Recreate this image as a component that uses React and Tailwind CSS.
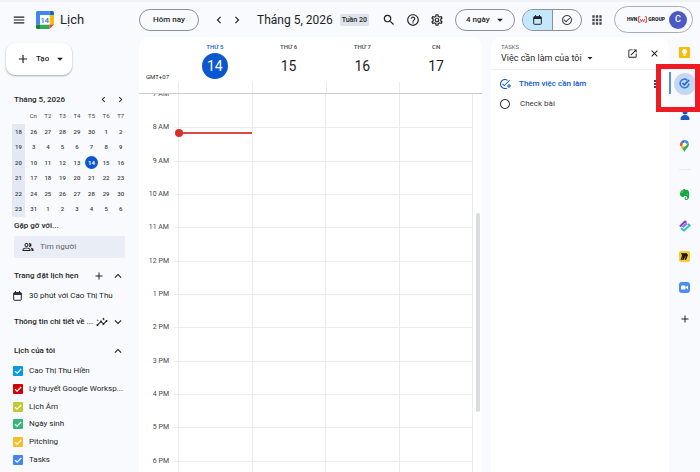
import React from "react";
import {
  MdAdd,
  MdApps,
  MdArrowDropDown,
  MdCheckCircleOutline,
  MdChevronLeft,
  MdChevronRight,
  MdClose,
  MdExpandLess,
  MdExpandMore,
  MdHelpOutline,
  MdInsights,
  MdMenu,
  MdMoreVert,
  MdOpenInNew,
  MdOutlineAddTask,
  MdOutlineCalendarToday,
  MdOutlinePeopleAlt,
  MdOutlineSettings,
  MdPerson,
  MdRadioButtonUnchecked,
  MdSearch,
} from "react-icons/md";
import { SiEvernote } from "react-icons/si";

const weekDays = ["Cn", "T2", "T3", "T4", "T5", "T6", "T7"];

const weeks = [
  { no: 18, days: [26, 27, 28, 29, 30, 1, 2] },
  { no: 19, days: [3, 4, 5, 6, 7, 8, 9] },
  { no: 20, days: [10, 11, 12, 13, 14, 15, 16] },
  { no: 21, days: [17, 18, 19, 20, 21, 22, 23] },
  { no: 22, days: [24, 25, 26, 27, 28, 29, 30] },
  { no: 23, days: [31, 1, 2, 3, 4, 5, 6] },
];

const calendars = [
  { name: "Cao Thị Thu Hiền", color: "bg-[#039be5]" },
  { name: "Lý thuyết Google Worksp...", color: "bg-[#d50000]" },
  { name: "Lịch Âm", color: "bg-[#c0ca33]" },
  { name: "Ngày sinh", color: "bg-[#33b679]" },
  { name: "Pitching", color: "bg-[#f6bf26]" },
  { name: "Tasks", color: "bg-[#4285f4]" },
];

const days = [
  { name: "THỨ 5", date: 14, today: true },
  { name: "THỨ 6", date: 15 },
  { name: "THỨ 7", date: 16 },
  { name: "CN", date: 17 },
];

const hours = ["7 AM", "8 AM", "9 AM", "10 AM", "11 AM", "12 PM", "1 PM", "2 PM", "3 PM", "4 PM", "5 PM", "6 PM"];

const CalendarLogo = () => (
  <svg viewBox="0 0 36 36" className="size-[18px] shrink-0" aria-hidden="true">
    <path d="M3 0h24v8H8v19H0V3a3 3 0 0 1 3-3z" fill="#4285f4" />
    <path d="M27 0h6a3 3 0 0 1 3 3v5h-9z" fill="#1967d2" />
    <path d="M27 8h9v19h-9z" fill="#fbbc04" />
    <path d="M8 27h19v9H8z" fill="#34a853" />
    <path d="M0 27h8v9H3a3 3 0 0 1-3-3z" fill="#188038" />
    <path d="M27 27h9l-9 9z" fill="#ea4335" />
    <path d="M8 8h19v19H8z" fill="#fff" />
    <text x="17.5" y="23" textAnchor="middle" fontSize="15" fontWeight="500" fontFamily="Roboto, sans-serif" fill="#1a73e8">
      14
    </text>
  </svg>
);

const CalendarIcon = () => (
  <svg viewBox="0 0 20 22" className="h-[10px] w-[9px] shrink-0" fill="none" stroke="currentColor" strokeWidth="2.2" aria-hidden="true">
    <rect x="1.500" y="3.500" width="17" height="17" rx="1.500" />
    <path d="M5.500 0v4M14.500 0v4" />
    <path d="M1.500 6.500h17" strokeWidth="4" />
  </svg>
);

const Header = () => (
  <header className="flex h-[37px] shrink-0 items-center border-t-2 border-[#f0f2f6] pl-3 pr-[7px]">
    <div className="flex w-[127px] shrink-0 items-center">
      <button aria-label="Menu chính">
        <MdMenu className="size-[14px]" />
      </button>
      <div className="ml-[10px] flex items-center gap-[6px]">
        <CalendarLogo />
        <span className="text-[13px] leading-5">Lịch</span>
      </div>
    </div>
    <button className="h-[22px] w-[60px] shrink-0 rounded-full border border-[#8d9199] text-[8px] font-medium">Hôm nay</button>
    <div className="ml-[13px] flex gap-1">
      <button aria-label="Trước">
        <MdChevronLeft className="size-[14px]" />
      </button>
      <button aria-label="Sau">
        <MdChevronRight className="size-[14px]" />
      </button>
    </div>
    <h1 className="ml-[13px] whitespace-nowrap text-[12px] leading-4">Tháng 5, 2026</h1>
    <span className="ml-[7px] whitespace-nowrap rounded-xs bg-[#dde3ea] px-[2px] text-[7px] font-medium leading-3">Tuần 20</span>
    <div className="ml-auto flex items-center">
      <div className="flex items-center gap-[10px]">
        <button aria-label="Tìm kiếm">
          <MdSearch className="size-[14px]" />
        </button>
        <button aria-label="Trợ giúp">
          <MdHelpOutline className="size-[14px]" />
        </button>
        <button aria-label="Cài đặt">
          <MdOutlineSettings className="size-[14px]" />
        </button>
      </div>
      <div className="relative ml-[11px]">
        <select
          aria-label="Chế độ xem"
          className="block h-[22px] w-[60px] appearance-none rounded-full border border-[#8d9199] pl-[10px] text-[8px] font-medium"
        >
          <option>4 ngày</option>
        </select>
        <MdArrowDropDown className="pointer-events-none absolute right-2 top-1 size-[14px]" />
      </div>
      <div className="ml-[7px] flex h-[22px] w-[60px] overflow-hidden rounded-full border border-[#8d9199]">
        <button aria-label="Lịch" className="flex flex-1 items-center justify-center border-r border-[#8d9199] bg-[#c2e7ff]">
          <CalendarIcon />
        </button>
        <button aria-label="Việc cần làm" className="flex flex-1 items-center justify-center">
          <MdCheckCircleOutline className="size-3 text-[#444746]" />
        </button>
      </div>
      <button aria-label="Ứng dụng" className="ml-2">
        <MdApps className="size-[14px] text-[#444746]" />
      </button>
      <button className="ml-[10px] flex h-[27px] w-[79px] items-center justify-end gap-1 rounded-full border border-[#a9adb5] pr-[5px]">
        <span className="flex items-center text-[5px] font-black">
          HVN
          <svg viewBox="0 0 16 12" className="mx-px h-[7px] w-[9px]" fill="none" stroke="#e02b2b" strokeWidth="1.500" aria-hidden="true">
            <path d="M4 1H1v10h3M12 1h3v10h-3M4 5l2 5 2-4 2 4 2-5" />
          </svg>
          GROUP
        </span>
        <span className="flex size-[18px] items-center justify-center rounded-full bg-[#4b5bc6] text-[9px] font-medium text-white">C</span>
      </button>
    </div>
  </header>
);

const MiniCalendar = () => (
  <div>
    <div className="flex h-[17px] items-center pl-[14px] pr-[13px]">
      <span className="flex-1 text-[8px] font-medium">Tháng 5, 2026</span>
      <button aria-label="Tháng trước" className="mr-[6px]">
        <MdChevronLeft className="size-[11px]" />
      </button>
      <button aria-label="Tháng sau">
        <MdChevronRight className="size-[11px]" />
      </button>
    </div>
    <table className="ml-3 h-[109px] w-[116px] table-fixed text-center text-[6px] leading-3 text-[#3c4043]">
      <thead>
        <tr className="h-4">
          <th className="w-[14px]" />
          {weekDays.map((day) => (
            <th key={day} className="p-0 font-normal text-[#444746]">
              {day}
            </th>
          ))}
        </tr>
      </thead>
      <tbody className="font-medium">
        {weeks.map((week) => (
          <tr key={week.no} className="h-[15px]">
            <td className="border-r-2 border-[#f8fafd] bg-[#e3e8f2] p-0">{week.no}</td>
            {week.days.map((day, i) => (
              <td key={i} className="p-0">
                {week.no === 20 && day === 14 ? (
                  <span className="mx-auto flex size-[13px] items-center justify-center rounded-full bg-[#0b57d0] font-bold text-white">
                    {day}
                  </span>
                ) : (
                  day
                )}
              </td>
            ))}
          </tr>
        ))}
      </tbody>
    </table>
  </div>
);

const Sidebar = () => (
  <aside className="w-[139px] shrink-0">
    <button className="ml-[6px] mt-[6px] flex h-8 w-[66px] items-center rounded-[9px] bg-white pl-[10px] text-[8px] font-medium shadow-[0_1px_2px_#0005]">
      <MdAdd className="size-[14px]" />
      <span className="ml-[6px]">Tạo</span>
      <MdArrowDropDown className="ml-1 size-[14px]" />
    </button>
    <div className="mt-4">
      <MiniCalendar />
    </div>
    <h2 className="ml-[14px] mt-1 text-[8px] font-medium leading-[10px]">Gặp gỡ với...</h2>
    <div className="ml-[14px] mt-[5px] flex h-[22px] w-[111px] items-center rounded-xs bg-[#e9edf6] pl-2">
      <MdOutlinePeopleAlt className="size-3 shrink-0" />
      <input
        aria-label="Tìm người"
        placeholder="Tìm người"
        className="ml-[6px] w-20 bg-transparent text-[8px] outline-none placeholder:text-[#5f6368]"
      />
    </div>
    <div className="mt-[10px] flex h-4 items-center pl-[14px] pr-[14px]">
      <h2 className="flex-1 text-[8px] font-medium">Trang đặt lịch hẹn</h2>
      <button aria-label="Tạo trang đặt lịch hẹn" className="mr-[6px]">
        <MdAdd className="size-3" />
      </button>
      <button aria-label="Thu gọn trang đặt lịch hẹn">
        <MdExpandLess className="size-[14px]" />
      </button>
    </div>
    <a href="#booking" className="mt-1 flex h-4 items-center pl-[13px] text-[8px]">
      <CalendarIcon />
      <span className="ml-[7px]">30 phút với Cao Thị Thu</span>
    </a>
    <div className="mt-[10px] flex h-4 items-center pl-[14px] pr-[14px]">
      <h2 className="flex-1 whitespace-nowrap text-[8px] font-medium">Thông tin chi tiết về ...</h2>
      <MdInsights className="mr-[3px] size-3 shrink-0" />
      <button aria-label="Mở thông tin chi tiết">
        <MdExpandMore className="size-[14px]" />
      </button>
    </div>
    <div className="mt-[13px] flex h-4 items-center pl-[14px] pr-[14px]">
      <h2 className="flex-1 text-[8px] font-medium">Lịch của tôi</h2>
      <button aria-label="Thu gọn lịch của tôi">
        <MdExpandLess className="size-[14px]" />
      </button>
    </div>
    <div className="mt-[3px] grid h-[107px] grid-rows-6">
      {calendars.map((cal) => (
        <label key={cal.name} className="flex items-center whitespace-nowrap pl-[13px] text-[8px]">
          <span className="relative size-[10px] shrink-0">
            <input type="checkbox" defaultChecked className={`block size-[10px] appearance-none rounded-[1px] ${cal.color}`} />
            <svg
              viewBox="0 0 10 10"
              className="pointer-events-none absolute inset-0"
              fill="none"
              stroke="#fff"
              strokeWidth="1.3"
              aria-hidden="true"
            >
              <path d="M2 5.2l2.1 2L8.2 3" />
            </svg>
          </span>
          <span className="ml-[6px]">{cal.name}</span>
        </label>
      ))}
    </div>
  </aside>
);

const WeekView = () => (
  <main className="relative flex min-w-0 flex-1 flex-col overflow-hidden rounded-t-[10px] bg-white">
    <div className="flex h-[56px] shrink-0 pr-[9px]">
      <div className="flex w-[39px] items-end justify-end pb-3 pr-[9px] text-[6px] leading-[8px]">GMT+07</div>
      {days.map((day) => (
        <div key={day.date} className="flex flex-1 flex-col items-center pt-[5px]">
          <span className={`text-[6px] font-medium leading-[10px] ${day.today ? "text-[#0b57d0]" : "text-[#444746]"}`}>{day.name}</span>
          <span
            className={`mt-px flex size-[26px] items-center justify-center rounded-full text-[14px] leading-none ${
              day.today ? "bg-[#0b57d0] text-white" : ""
            }`}
          >
            {day.date}
          </span>
        </div>
      ))}
      <div className="absolute left-[39px] right-[9px] top-[45px] flex h-[11px]">
        {days.map((day) => (
          <div key={day.date} className="flex-1 border-l border-[#eaecee]" />
        ))}
      </div>
    </div>
    <div className="min-h-0 flex-1 overflow-hidden border-t border-[#c9cdd3]">
      <div className="flex h-[400px] pr-[9px]">
        <div className="grid w-[35px] grid-rows-12 text-[#444746]">
          {hours.map((hour) => (
            <span key={hour} className="-mt-1 pr-[5px] text-right text-[7px] leading-[8px]">
              {hour}
            </span>
          ))}
        </div>
        <div className="relative flex-1">
          <div className="grid h-full grid-rows-12">
            {hours.map((hour) => (
              <div key={hour} className="border-t border-[#eaecee] first:border-transparent" />
            ))}
          </div>
          <div className="absolute inset-y-0 left-1 right-0 flex">
            {days.map((day) => (
              <div key={day.date} className="relative flex-1 border-l border-[#eaecee] last:border-r">
                {day.today && (
                  <div className="absolute left-0 right-0 top-[38px] h-[2px] bg-[#dc4a40]">
                    <span className="absolute -left-1 -top-[3px] size-2 rounded-full bg-[#d93025]" />
                  </div>
                )}
              </div>
            ))}
          </div>
        </div>
      </div>
    </div>
    <div className="absolute right-[2px] top-[176px] h-[199px] w-1 rounded-full bg-[#dadce0]" />
  </main>
);

const TasksPanel = () => (
  <section className="ml-[9px] w-[178px] shrink-0 rounded-t-[10px] bg-white">
    <div className="flex h-[33px] items-center border-b border-[#eef0f2] pl-[10px] pr-[9px]">
      <div className="flex-1">
        <div className="mt-px text-[6px] leading-[8px] text-[#5f6368]">TASKS</div>
        <div className="relative">
          <select aria-label="Danh sách việc cần làm" className="block w-[98px] appearance-none text-[9px] leading-[14px]">
            <option>Việc cần làm của tôi</option>
          </select>
          <MdArrowDropDown className="pointer-events-none absolute left-[83px] top-px size-3" />
        </div>
      </div>
      <button aria-label="Mở trong cửa sổ mới">
        <MdOpenInNew className="size-[11px]" />
      </button>
      <button aria-label="Đóng" className="ml-[11px]">
        <MdClose className="size-[11px]" />
      </button>
    </div>
    <div className="mt-1 flex h-5 items-center pl-2">
      <button className="flex flex-1 items-center text-[8px] font-medium text-[#0b57d0]">
        <MdOutlineAddTask className="size-3" />
        <span className="ml-2">Thêm việc cần làm</span>
      </button>
      <button aria-label="Tùy chọn" className="mr-2">
        <MdMoreVert className="size-3" />
      </button>
    </div>
    <div className="flex h-5 items-center pl-2 text-[8px] text-[#3c4043]">
      <button aria-label="Đánh dấu hoàn tất">
        <MdRadioButtonUnchecked className="size-3" />
      </button>
      <span className="ml-[9px]">Check bài</span>
    </div>
  </section>
);

const RailButton = ({ label, children }) => (
  <button aria-label={label} className="flex h-[31px] w-full items-center justify-center">
    {children}
  </button>
);

const SideRail = () => (
  <nav className="relative w-[31px] shrink-0">
    <RailButton label="Keep">
      <svg viewBox="0 0 22 22" className="size-[11px]">
        <rect width="22" height="22" rx="2" fill="#fbbc04" />
        <path d="M11 4a5 5 0 0 0-2.6 9.300V15h5.200v-1.700A5 5 0 0 0 11 4zM9 16h4v2H9z" fill="#fff" />
      </svg>
    </RailButton>
    <RailButton label="Tasks">
      <span className="flex size-[22px] items-center justify-center rounded-full bg-[#c6d7f3]">
        <svg viewBox="0 0 24 24" className="size-[11px]" fill="none" strokeWidth="3.500">
          <path d="M18 4.500A9.500 9.500 0 1 0 21.500 12" stroke="#2a7de9" />
          <path d="M7.500 11l4 4L22 4.500" stroke="#1967d2" />
        </svg>
      </span>
    </RailButton>
    <RailButton label="Danh bạ">
      <svg viewBox="0 0 20 24" className="h-3 w-[10px]" fill="#1a56c4">
        <circle cx="10" cy="6" r="5" />
        <path d="M1 20c0-5 4-8 9-8s9 3 9 8c0 1.500-1 2-2 2H3c-1 0-2-.5-2-2z" />
      </svg>
    </RailButton>
    <RailButton label="Maps">
      <svg viewBox="0 0 18 24" className="h-3 w-[9px]">
        <path d="M9 0a9 9 0 0 1 8.600 6.500L9 9z" fill="#4285f4" />
        <path d="M9 0a9 9 0 0 0-7 3.300L9 9z" fill="#1a73e8" />
        <path d="M2 3.300A9 9 0 0 0 1.200 13L9 9z" fill="#ea4335" />
        <path d="M1.200 13c1 2 2.500 3.500 3.800 5.500L13 9H9z" fill="#fbbc04" />
        <path d="M17.600 6.500C19 14 12 16 9 24c-1-2-2-4-4-6l8-9z" fill="#34a853" />
        <circle cx="9" cy="9" r="4" fill="#fff" />
      </svg>
    </RailButton>
    <hr className="mx-auto mb-[9px] mt-[8px] w-3 border-[#e9ebee]" />
    <RailButton label="Evernote">
      <SiEvernote className="size-[11px] text-[#14a83b]" />
    </RailButton>
    <RailButton label="Lucid">
      <svg viewBox="0 0 24 24" className="size-3" fill="none" strokeWidth="4">
        <path d="M2 13L12 3l3 2" stroke="#7a3fd0" />
        <path d="M7 14l9-7" stroke="#8a63e0" />
        <path d="M4 16l6 5L21 11l-3-3" stroke="#29c5b4" />
      </svg>
    </RailButton>
    <RailButton label="Miro">
      <svg viewBox="0 0 22 22" className="size-[11px]">
        <rect width="22" height="22" rx="4" fill="#fcca2e" />
        <path d="M4 4h3l2 3-1-3h3l2 3-1-3h3l3 4-4 10h-3l3-9-5 9H6l3-9-4 9H3l3-9z" fill="#1c1c1e" />
      </svg>
    </RailButton>
    <RailButton label="Zoom">
      <svg viewBox="0 0 22 22" className="size-[11px]">
        <rect width="22" height="22" rx="6" fill="#4a8cf0" />
        <rect x="4" y="7" width="9" height="8" rx="2" fill="#fff" />
        <path d="M14 10l4-3v8l-4-3z" fill="#fff" />
      </svg>
    </RailButton>
    <RailButton label="Tải tiện ích bổ sung">
      <MdAdd className="size-3" />
    </RailButton>
    {/* highlight around the tasks shortcut */}
    <div className="pointer-events-none absolute -left-[13px] right-0 top-[27px] h-12 border-5 border-[#ed1c24]">
      <div className="ml-2 mt-[3px] h-[22px] w-[2px] bg-[#5a8fd8]" />
    </div>
  </nav>
);

export default function App() {
  return (
    <div className="flex h-screen flex-col overflow-hidden bg-[#f8fafd] font-[Roboto,'Noto_Sans',sans-serif] text-[#1f1f1f]">
      <Header />
      <div className="flex min-h-0 flex-1">
        <Sidebar />
        <WeekView />
        <TasksPanel />
        <SideRail />
      </div>
    </div>
  );
}
